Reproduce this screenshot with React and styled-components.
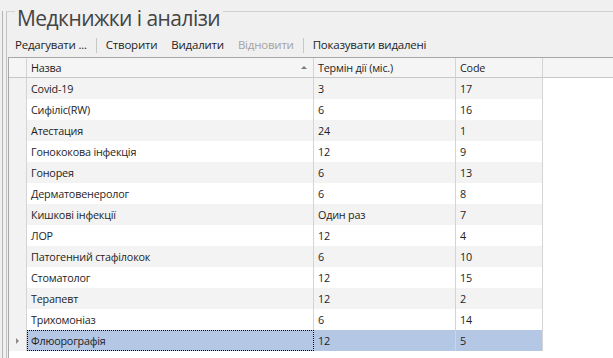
import React from "react";
import styled, { createGlobalStyle } from "styled-components";

const Global = createGlobalStyle`
  html, body { margin: 0; padding: 0; background: #f0f0f0; overflow: hidden; }
  body { font-family: "Open Sans", "Noto Sans", sans-serif; }
  #root { height: 358px; }
`;

const Frame = styled.div`
  height: 358px;
  margin-left: 2px;
  border-left: 1px solid #b4b4b4;
  padding-left: 3px;
  box-sizing: border-box;
`;

const GroupBox = styled.div`
  margin-top: 11px;
  height: 347px;
  border-top: 1px solid #d2d2d2;
  border-left: 1px solid #c4c4c4;
  display: flex;
  flex-direction: column;
  align-items: stretch;
`;

const Title = styled.div`
  align-self: flex-start;
  margin: -7px 0 0 8px;
  padding: 0 3px 0 2px;
  background: #f0f0f0;
  font-size: 21px;
  line-height: 27px;
  height: 27px;
  color: #444;
  letter-spacing: -0.55px;
`;

const Toolbar = styled.div`
  display: flex;
  align-items: center;
  margin-top: 3px;
  height: 20px;
  padding-left: 1px;
`;

const ToolButton = styled.div`
  padding: 0 7px;
  font-size: 11.5px;
  letter-spacing: -0.22px;
  line-height: 20px;
  color: ${(p) => (p.disabled ? "#a3a3a3" : "#1e1e1e")};
  white-space: nowrap;
`;

const Separator = styled.div`
  width: 1px;
  height: 15px;
  background: #c8c8c8;
  margin: 0 2px;
`;

const Grid = styled.div`
  margin: 2px 0 0 1px;
  flex: 1;
  background: #fff;
  border-top: 1px solid #a8a8a8;
  border-left: 1px solid #a8a8a8;
  font-size: 10.8px;
  letter-spacing: -0.2px;
  color: #1e1e1e;
`;

const cols = "18px 287px 142px 87px 1fr";

const HeaderRow = styled.div`
  display: grid;
  grid-template-columns: ${cols};
  height: 20px;
  box-sizing: border-box;
  border-bottom: 1px solid #c8c8c8;
  background: #f5f5f5;
`;

const HeaderCell = styled.div`
  position: relative;
  box-sizing: border-box;
  padding-left: 4px;
  line-height: 19px;
  border-right: ${(p) => (p.last ? "none" : "1px solid #d4d4d4")};
  white-space: nowrap;
`;

const SortArrow = styled.span`
  position: absolute;
  right: 6px;
  top: 8px;
  width: 0;
  height: 0;
  border-left: 3px solid transparent;
  border-right: 3px solid transparent;
  border-bottom: 3px solid #7a7a7a;
`;

const Row = styled.div`
  display: grid;
  grid-template-columns: ${cols};
  height: 21px;
`;

const Indicator = styled.div`
  box-sizing: border-box;
  background: #f2f2f2;
  border-right: 1px solid #d4d4d4;
  display: flex;
  align-items: center;
  padding-left: 7px;
`;

const RowArrow = styled.span`
  width: 0;
  height: 0;
  border-top: 3px solid transparent;
  border-bottom: 3px solid transparent;
  border-left: 3px solid #8a8a8a;
  margin-top: 1px;
`;

const Cell = styled.div`
  box-sizing: border-box;
  padding-left: 4px;
  line-height: 21px;
  white-space: nowrap;
  overflow: hidden;
  border-right: 1px solid #d4d4d4;
  background: ${(p) => (p.selected ? "#b4c7e4" : p.alt ? "#f3f3f3" : "#ffffff")};
  outline: ${(p) => (p.focused ? "1px dotted #000" : "none")};
  outline-offset: -1px;
`;

const rows = [
  ["Covid-19", "3", "17"],
  ["Сифіліс(RW)", "6", "16"],
  ["Атестация", "24", "1"],
  ["Гонококова інфекція", "12", "9"],
  ["Гонорея", "6", "13"],
  ["Дерматовенеролог", "6", "8"],
  ["Кишкові інфекції", "Один раз", "7"],
  ["ЛОР", "12", "4"],
  ["Патогенний стафілокок", "6", "10"],
  ["Стоматолог", "12", "15"],
  ["Терапевт", "12", "2"],
  ["Трихомоніаз", "6", "14"],
  ["Флюорографія", "12", "5"],
];

export default function App() {
  const selected = rows.length - 1;
  return (
    <>
      <Global />
      <Frame>
        <GroupBox>
          <Title>Медкнижки і аналізи</Title>
          <Toolbar>
            <ToolButton>Редагувати ...</ToolButton>
            <Separator />
            <ToolButton>Створити</ToolButton>
            <ToolButton>Видалити</ToolButton>
            <ToolButton disabled>Відновити</ToolButton>
            <Separator />
            <ToolButton>Показувати видалені</ToolButton>
          </Toolbar>
          <Grid>
            <HeaderRow>
              <HeaderCell />
              <HeaderCell>
                Назва
                <SortArrow />
              </HeaderCell>
              <HeaderCell>Термін дії (міс.)</HeaderCell>
              <HeaderCell>Code</HeaderCell>
              <HeaderCell last />
            </HeaderRow>
            {rows.map((r, i) => {
              const sel = i === selected;
              const alt = i % 2 === 0;
              return (
                <Row key={r[0]}>
                  <Indicator>{sel && <RowArrow />}</Indicator>
                  <Cell alt={alt} selected={sel} focused={sel}>{r[0]}</Cell>
                  <Cell alt={alt} selected={sel}>{r[1]}</Cell>
                  <Cell alt={alt} selected={sel}>{r[2]}</Cell>
                  <div />
                </Row>
              );
            })}
          </Grid>
        </GroupBox>
      </Frame>
    </>
  );
}
